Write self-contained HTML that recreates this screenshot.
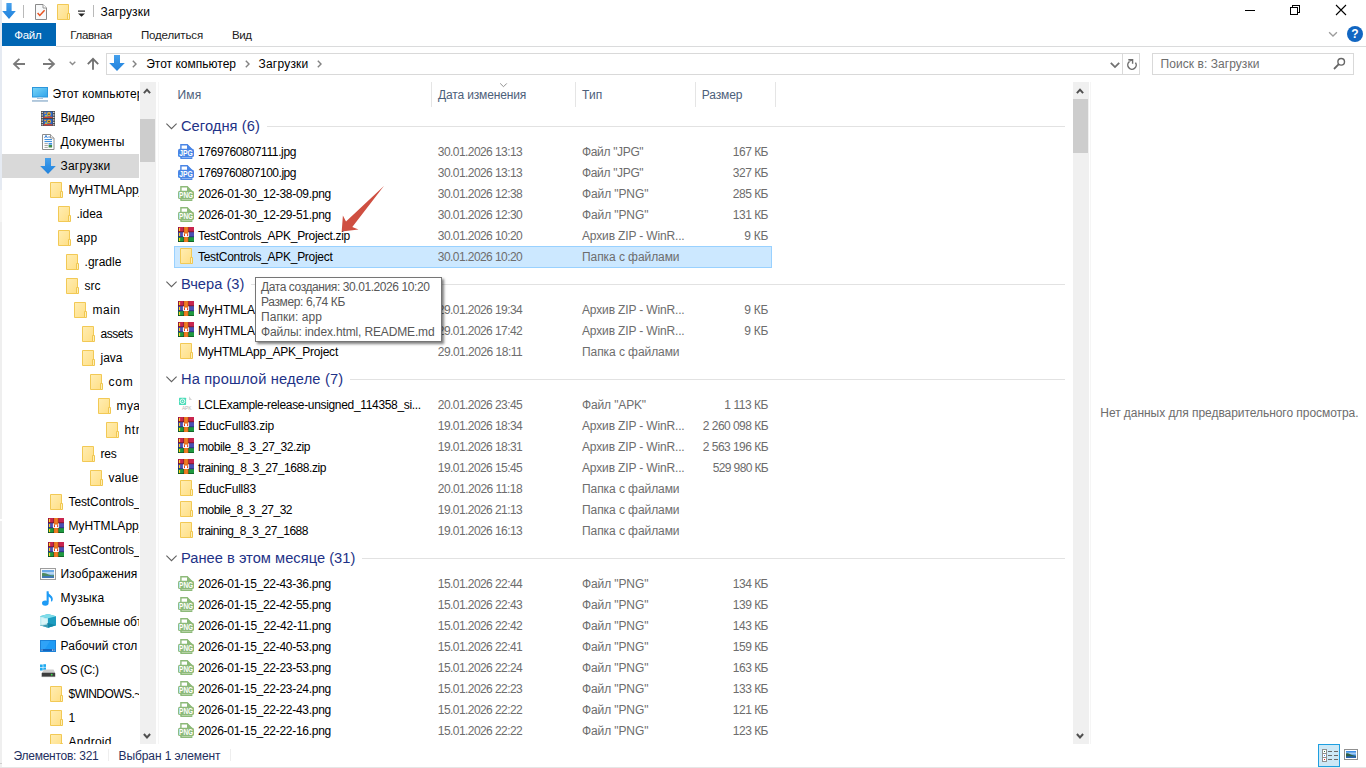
<!DOCTYPE html>
<html lang="ru"><head><meta charset="utf-8"><title>Загрузки</title>
<style>
html,body{margin:0;padding:0;background:#fff}
body{width:1366px;height:768px;position:relative;overflow:hidden;font:12px/16px 'Liberation Sans', 'DejaVu Sans', sans-serif;color:#000}
.ic{position:absolute;display:block;overflow:visible}
.t{position:absolute;white-space:pre;font-family:'Liberation Sans', 'DejaVu Sans', sans-serif;font-size:12.0px;line-height:16px}
</style></head><body>

<svg width="0" height="0" style="position:absolute">
<defs>
<linearGradient id="gfold" x1="0" y1="0" x2="1" y2="1"><stop offset="0" stop-color="#ffedb3"/><stop offset="1" stop-color="#ffdf85"/></linearGradient>
<linearGradient id="gmon" x1="0" y1="0" x2="1" y2="1"><stop offset="0" stop-color="#7ad6f8"/><stop offset="1" stop-color="#2fa3ea"/></linearGradient>
<linearGradient id="garr" x1="0" y1="0" x2="0" y2="1"><stop offset="0" stop-color="#47a1ec"/><stop offset=".5" stop-color="#2f8fe4"/><stop offset="1" stop-color="#2383dc"/></linearGradient>
<symbol id="i-folder" viewBox="0 0 16 16"><path d="M2.500.500h11v15h-11z" fill="url(#gfold)" stroke="#f2c955" stroke-width="1"/><path d="M12.500 9.500h2v6h-2z" fill="#ffefb8" stroke="#f0c750" stroke-width="1"/></symbol>
<symbol id="i-down" viewBox="0 0 16 16" preserveAspectRatio="none"><path d="M5 0h6v8h4.800L8 16 .2 8H5z" fill="url(#garr)"/></symbol>
<symbol id="i-rar" viewBox="0 0 16 16"><rect x="0" y="0" width="16" height="5" fill="#c9254f"/><rect x="0" y="5" width="16" height="5" fill="#4b50b4"/><rect x="0" y="10" width="16" height="5" fill="#1f9a40"/><rect x="0" y="4.300" width="16" height=".9" fill="#7a1631"/><rect x="0" y="9.300" width="16" height=".9" fill="#2b2f7a"/><rect x="0" y="14.200" width="16" height=".8" fill="#0f5a22"/><rect x="0" y="0" width=".9" height="15" fill="#000" opacity=".3"/><rect x="5.100" y="0" width=".8" height="15" fill="#000" opacity=".35"/><rect x="10.300" y="0" width=".8" height="15" fill="#000" opacity=".35"/><rect x="5.900" y="0" width="4.400" height="15" fill="#e8711c"/><rect x="7.600" y="0" width="1" height="15" fill="#f08a30"/><g fill="#ffd21f"><rect x="1" y="1" width="1.100" height="3"/><rect x="1" y="6" width="1.100" height="3"/><rect x="1" y="11" width="1.100" height="3"/></g><rect x="4.900" y="5.200" width="6.200" height="4.800" rx=".9" fill="#fff"/><rect x="5.900" y="5" width="4.300" height="1.600" fill="#e8711c"/><rect x="5.900" y="6.500" width="1.100" height="1.700" fill="#e65a18"/><rect x="9.100" y="6.500" width="1.100" height="1.700" fill="#e65a18"/><rect x="6" y="8" width=".9" height="1.100" fill="#e0140c"/><rect x="9.200" y="8" width=".9" height="1.100" fill="#e0140c"/></symbol>
<symbol id="i-jpg" viewBox="0 0 16 16"><path d="M2.900 1.700h6.300l4.200 4.300V15H2.900z" fill="#fff" stroke="#4a86e6" stroke-width="1.400"/><path d="M9 1v5.200h5.100z" fill="#4a86e6"/><rect x="2.900" y="14" width="11.400" height="2" fill="#4a86e6"/><rect x="3.800" y="14.500" width="9.800" height=".5" fill="#cfdffa"/><rect x="0" y="5.800" width="16" height="8.300" rx="1.700" fill="#4a86e6"/><text x="8.100" y="13" font-family="Liberation Sans, sans-serif" font-weight="bold" font-size="8.800" text-anchor="middle" fill="#fff" textLength="13.600" lengthAdjust="spacingAndGlyphs">JPG</text></symbol>
<symbol id="i-png" viewBox="0 0 16 16"><path d="M2.900 1.700h6.300l4.200 4.300V15H2.900z" fill="#fff" stroke="#8dba79" stroke-width="1.400"/><path d="M9 1v5.200h5.100z" fill="#8dba79"/><rect x="2.900" y="14" width="11.400" height="2" fill="#8dba79"/><rect x="3.800" y="14.500" width="9.800" height=".5" fill="#dcebd4"/><rect x="0" y="5.800" width="16" height="8.300" rx="1.700" fill="#8dba79"/><text x="8.100" y="13" font-family="Liberation Sans, sans-serif" font-weight="bold" font-size="8.800" text-anchor="middle" fill="#fff" textLength="14" lengthAdjust="spacingAndGlyphs">PNG</text></symbol>
<symbol id="i-apk" viewBox="0 1 16 16"><rect x="1" y="2.700" width="7.100" height="7.200" rx=".6" fill="#4adcb8"/><circle cx="4.500" cy="6.300" r="2.300" fill="none" stroke="#eafbf6" stroke-width="1"/><circle cx="4.500" cy="6.300" r=".8" fill="#eafbf6"/><path d="M11 1.300l3 3.700h-3z" fill="#d6d6d6"/><text x="8.700" y="15.200" font-family="Liberation Sans, sans-serif" font-size="4.800" text-anchor="middle" fill="#b4b4b4">APK</text></symbol>
<symbol id="i-pc" viewBox="0 0 16 16"><rect x=".5" y="1.500" width="15" height="9.500" fill="url(#gmon)" stroke="#2c96dc" stroke-width="1"/><rect x="5" y="12" width="6" height="1" fill="#a9c3d9"/><rect x="6.500" y="11.300" width="3" height=".9" fill="#c6d8e6"/><rect x="0" y="14.200" width="16" height="1.500" fill="#9cb9d3"/></symbol>
<symbol id="i-video" viewBox="0 0 16 16"><rect x="1" y="1" width="14" height="15" fill="#454545"/><rect x="3.500" y="1.600" width="9" height="6.400" fill="#2f6fd6"/><rect x="3.500" y="9" width="9" height="6.400" fill="#2a66cc"/><circle cx="9" cy="4" r="1.900" fill="#f0b02c"/><circle cx="9" cy="11.400" r="1.900" fill="#f0b02c"/><circle cx="9" cy="4.200" r=".8" fill="#3a3020"/><circle cx="9" cy="11.600" r=".8" fill="#3a3020"/><path d="M3.500 7l2-.8 1.800.5 2-.4 3.200.7V8H3.500z" fill="#d2452c"/><path d="M3.500 14.400l2-.8 1.800.5 2-.4 3.200.7v1H3.500z" fill="#d2452c"/><rect x="4.200" y="2.400" width="2" height="1.400" fill="#e9a13a"/><rect x="4.200" y="9.800" width="2" height="1.400" fill="#e9a13a"/><rect x="5" y="5" width="2.400" height="1.600" fill="#c9d94a" opacity=".8"/><rect x="5" y="12.400" width="2.400" height="1.600" fill="#c9d94a" opacity=".8"/><g fill="#f4f4f4"><rect x="1.600" y="1.800" width="1.200" height="1.300"/><rect x="1.600" y="4.300" width="1.200" height="1.300"/><rect x="1.600" y="6.800" width="1.200" height="1.300"/><rect x="1.600" y="9.300" width="1.200" height="1.300"/><rect x="1.600" y="11.800" width="1.200" height="1.300"/><rect x="1.600" y="14.200" width="1.200" height="1.200"/><rect x="13.200" y="1.800" width="1.200" height="1.300"/><rect x="13.200" y="4.300" width="1.200" height="1.300"/><rect x="13.200" y="6.800" width="1.200" height="1.300"/><rect x="13.200" y="9.300" width="1.200" height="1.300"/><rect x="13.200" y="11.800" width="1.200" height="1.300"/><rect x="13.200" y="14.200" width="1.200" height="1.200"/></g></symbol>
<symbol id="i-docs" viewBox="0 0 16 16"><path d="M2.500.500h8l3.500 3.500v11.500h-11.500z" fill="#fff" stroke="#8c8c8c" stroke-width="1"/><path d="M10.500.500V4H14" fill="#ececec" stroke="#8c8c8c" stroke-width=".9"/><path d="M4.500 5.600h7.500M4.500 7.600h7.500" stroke="#2f86dc" stroke-width="1"/><path d="M4.600 4l1.400-2.600L7.400 4M8.300 3h1.600" stroke="#1f6fcc" stroke-width=".9" fill="none"/><path d="M4.500 9.600h3.300M4.500 11.500h3.300M4.500 13.400h3.300" stroke="#9a9a9a" stroke-width=".9"/><rect x="8.600" y="9.100" width="3.500" height="1.500" fill="#2f86dc"/><rect x="8.600" y="11" width="3.500" height="2.500" fill="#3c8a4b"/></symbol>
<symbol id="i-pics" viewBox="0 0 16 16"><rect x=".5" y="2.500" width="15" height="11" fill="#fafafa" stroke="#9d9d9d" stroke-width="1"/><rect x="2" y="4" width="12" height="8" fill="#6aa9e6"/><rect x="2" y="6" width="12" height="2.500" fill="#c9e0f4" opacity=".8"/><path d="M2 7.200c2.500-.8 4.500.2 6.500 1.400 2 .9 3.800.8 5.500.4V12H2z" fill="#4e8a63"/><path d="M2 10.400c3-.6 8-.4 12 0V12H2z" fill="#3f78b8"/></symbol>
<symbol id="i-music" viewBox="0 0 16 16"><rect x="6.600" y="1.300" width="2.100" height="11" fill="#1e9bf5"/><path d="M7 1.300c1 3 5.800 4 5.800 7.700 0 1-.3 1.800-.8 2.400-.9.300-1.300-.2-1-.8.500-3-2.200-4-4-4.600z" fill="#1e9bf5"/><ellipse cx="5.300" cy="13.100" rx="3.300" ry="2.600" fill="#1e9bf5"/></symbol>
<symbol id="i-3d" viewBox="0 2 16 16"><path d="M0 4.300L8 2l8 2.300v9L8 15.700 0 13.300z" fill="#2fb6d0"/><path d="M0 4.300l8 2v9.400l-8-2.400z" fill="#bfecf2"/><path d="M8 6.300l8-2v9l-8 2.400z" fill="#1c9cc0"/><path d="M0 4.300L8 2l8 2.300-8 2z" fill="#7edce9"/><path d="M0 13.300l8-2.300 8 2.300-8 2.400z" fill="#0f7f9e" opacity=".75"/><path d="M1.500 6l5.500 1.300v5.200l-5.500 1.200z" fill="#e2f8fa" opacity=".75"/></symbol>
<symbol id="i-desk" viewBox="0 0 16 16"><rect x=".5" y="2.500" width="15" height="11" fill="#1e9bf5" stroke="#1b82d8" stroke-width="1"/><path d="M1 3l9 0L5 11H1z" fill="#3aa9f8" opacity=".6"/><rect x="1" y="11" width="14" height="2" fill="#1466c0"/><rect x="1.500" y="11.600" width="1" height="1" fill="#fff"/><rect x="12" y="11.600" width="1" height="1" fill="#fff"/><rect x="13.600" y="11.600" width="1" height="1" fill="#fff"/></symbol>
<symbol id="i-drive" viewBox="0 -2.200 16 16"><g fill="#1eaaf0"><rect x="0" y=".3" width="2.700" height="2.700"/><rect x="3.300" y="0" width="2.700" height="2.700"/><rect x="0" y="3.600" width="2.700" height="2.700"/><rect x="3.300" y="3.300" width="2.700" height="2.700"/></g><path d="M4 5.300h9.500l1.700 3.600H1.800z" fill="#cdcdcd"/><rect x="1.700" y="8.600" width="13.500" height="4" rx=".6" fill="#3d3d3d"/><rect x="1.700" y="12" width="13.500" height=".9" fill="#8a8a8a" opacity=".6"/><circle cx="11.700" cy="10.500" r=".9" fill="#38e04a"/></symbol>
</defs></svg>

<div style="position:absolute;left:0px;top:0px;width:2px;height:768px;background:linear-gradient(#e5eaf2 0,#e5eaf2 190px,#f5f5f5 190px,#f5f5f5 222px,#efefef 222px,#efefef 519px,#fff 519px,#fff 521px,#efefef 521px,#efefef 763px,#cfcfcf 763px,#cfcfcf 764px,#f0f0f0 764px)"></div>
<svg class="ic" style="left:1.8px;top:3px" width="14" height="16"><use href="#i-down"/></svg>
<div style="position:absolute;left:23px;top:5px;width:1px;height:13px;background:#b9b9b9"></div>
<svg class="ic" style="left:35px;top:4px" width="12" height="16" viewBox="0 0 12 16"><path d="M.5.500h7.500L11.500 4v11.500H.5z" fill="#f8f9fa" stroke="#8a8a8a" stroke-width="1"/><path d="M8 .5V4h3.500" fill="#fff" stroke="#8a8a8a" stroke-width=".9"/><path d="M2.600 9l2.200 2.400L9.600 6.200" fill="none" stroke="#e8521f" stroke-width="1.500"/></svg>
<svg class="ic" style="left:55px;top:4px" width="16" height="16"><use href="#i-folder"/></svg>
<svg class="ic" style="left:78px;top:9.500px" width="8" height="7" viewBox="0 0 8 7"><rect x="0" y="0.5" width="7" height="1.2" fill="#222"/><path d="M0 3.4h7L3.5 6.8z" fill="#222"/></svg>
<div style="position:absolute;left:93px;top:5px;width:1px;height:12px;background:#b9b9b9"></div>
<span class="t" style="left:100.50px;top:3.50px;letter-spacing:0.150px;color:#000">Загрузки</span>
<svg class="ic" style="left:1240px;top:0" width="120" height="22" viewBox="0 0 120 22" shape-rendering="crispEdges"><path d="M5 10.5h10" stroke="#000" stroke-width="1"/><path d="M50.500 7.500h7v7h-7z" fill="none" stroke="#000"/><path d="M52.500 7v-1.500h7v7h-1.500" fill="none" stroke="#000"/></svg>
<svg class="ic" style="left:1335px;top:4px" width="12" height="12" viewBox="0 0 12 12"><path d="M1 1l10 10M11 1L1 11" stroke="#000" stroke-width="1.1" fill="none"/></svg>
<div style="position:absolute;left:2px;top:23px;width:54px;height:23px;background:#0066b4"></div>
<span class="t" style="left:14.20px;top:27.00px;letter-spacing:-0.270px;color:#fff;font-size:11.5px">Файл</span>
<span class="t" style="left:70.30px;top:27.00px;letter-spacing:-0.312px;color:#1c1c1c;font-size:11.5px">Главная</span>
<span class="t" style="left:140.90px;top:27.00px;letter-spacing:-0.142px;color:#1c1c1c;font-size:11.5px">Поделиться</span>
<span class="t" style="left:232.10px;top:27.00px;letter-spacing:-0.471px;color:#1c1c1c;font-size:11.5px">Вид</span>
<div style="position:absolute;left:56px;top:46px;width:1310px;height:1px;background:#dadbdc"></div>
<svg class="ic" style="left:1328px;top:31px" width="10" height="7" viewBox="0 0 10 7"><path d="M1.100 1.200L5 5 8.900 1.200" fill="none" stroke="#9c9c9c" stroke-width="1.300"/></svg>
<div style="position:absolute;left:1347px;top:26px;width:16px;height:16px;border-radius:8px;background:#1166c2;color:#fff;font:bold 12px/16px 'Liberation Sans',sans-serif;text-align:center">?</div>
<svg class="ic" style="left:10px;top:54px" width="94" height="20" viewBox="10 54 94 20"><g fill="none" stroke="#7a7a7a" stroke-width="1.800"><path d="M25 64H14.500M19.400 58.800L14 64l5.400 5.200"/><path d="M43 64h10.500M48.600 58.800L54 64l-5.400 5.200"/><path d="M93 69.800V59.500M87.800 64.200L93 58.900l5.200 5.300" stroke="#707070"/></g><path d="M69.700 61.700l2.800 2.800 2.800-2.800" fill="none" stroke="#8c8c8c" stroke-width="1.400"/></svg>
<div style="position:absolute;left:106px;top:53px;width:1034px;height:22px;border:1px solid #d9d9d9;box-sizing:border-box;background:#fff"></div>
<svg class="ic" style="left:109px;top:55px" width="16" height="16"><use href="#i-down"/></svg>
<svg class="ic" style="left:132px;top:60px" width="5" height="8" viewBox="0 0 5 8"><path d="M.8.800L4 4 .8 7.200" fill="none" stroke="#828282" stroke-width="1.400"/></svg>
<svg class="ic" style="left:244.5px;top:60px" width="5" height="8" viewBox="0 0 5 8"><path d="M.8.800L4 4 .8 7.200" fill="none" stroke="#828282" stroke-width="1.400"/></svg>
<svg class="ic" style="left:317px;top:60px" width="5" height="8" viewBox="0 0 5 8"><path d="M.8.800L4 4 .8 7.200" fill="none" stroke="#828282" stroke-width="1.400"/></svg>
<span class="t" style="left:146.20px;top:55.50px;letter-spacing:0.005px;color:#000">Этот компьютер</span>
<span class="t" style="left:258.50px;top:55.50px;letter-spacing:0.213px;color:#000">Загрузки</span>
<svg class="ic" style="left:1108px;top:58px" width="14" height="12" viewBox="1108 58 14 12"><path d="M1110.800 62.900L1115 67.100 1119.200 62.900" fill="none" stroke="#707070" stroke-width="1.800"/></svg>
<div style="position:absolute;left:1122px;top:53px;width:1px;height:22px;background:#d9d9d9"></div>
<svg class="ic" style="left:1124px;top:56px" width="16" height="16" viewBox="1124 56 16 16"><path d="M1135.44 62.59A4.2 4.2 0 1 1 1129.41 61.69" fill="none" stroke="#6e6e6e" stroke-width="1.500"/><path d="M1128.300 59.800h4.300v4" fill="none" stroke="#6e6e6e" stroke-width="1.400"/><path d="M1129.300 61.300l3-1.300" stroke="#6e6e6e" stroke-width="1.200"/></svg>
<div style="position:absolute;left:1152px;top:53px;width:202px;height:22px;border:1px solid #d9d9d9;box-sizing:border-box;background:#fff"></div>
<span class="t" style="left:1160.50px;top:55.50px;letter-spacing:0.063px;color:#6d6d6d">Поиск в: Загрузки</span>
<svg class="ic" style="left:1333px;top:57px" width="13" height="13" viewBox="0 0 13 13"><circle cx="8.200" cy="4.800" r="3.300" fill="none" stroke="#666" stroke-width="1.400"/><path d="M5.800 7.200L1 12" stroke="#666" stroke-width="1.800"/></svg>
<div style="position:absolute;left:2px;top:154px;width:137px;height:24px;background:#d9d9d9"></div>
<div id="navclip" style="position:absolute;left:2px;top:82px;width:137px;height:662px;overflow:hidden">
<svg class="ic" style="left:30px;top:4px" width="16" height="16"><use href="#i-pc"/></svg>
<span class="t" style="left:50.50px;top:4.00px;letter-spacing:0.090px;color:#000">Этот компьютер</span>
<svg class="ic" style="left:38px;top:28px" width="16" height="16"><use href="#i-video"/></svg>
<span class="t" style="left:58.50px;top:28.00px;letter-spacing:-0.212px;color:#000">Видео</span>
<svg class="ic" style="left:38px;top:52px" width="16" height="16"><use href="#i-docs"/></svg>
<span class="t" style="left:58.50px;top:52.00px;letter-spacing:0.238px;color:#000">Документы</span>
<svg class="ic" style="left:38px;top:76px" width="16" height="16"><use href="#i-down"/></svg>
<span class="t" style="left:58.50px;top:76.00px;letter-spacing:0.213px;color:#000">Загрузки</span>
<svg class="ic" style="left:46px;top:100px" width="16" height="16"><use href="#i-folder"/></svg>
<span class="t" style="left:66.50px;top:100.00px;letter-spacing:0.032px;color:#000">MyHTMLApp_</span>
<svg class="ic" style="left:54px;top:124px" width="16" height="16"><use href="#i-folder"/></svg>
<span class="t" style="left:74.50px;top:124.00px;letter-spacing:-0.006px;color:#000">.idea</span>
<svg class="ic" style="left:54px;top:148px" width="16" height="16"><use href="#i-folder"/></svg>
<span class="t" style="left:74.50px;top:148.00px;letter-spacing:0.323px;color:#000">app</span>
<svg class="ic" style="left:62px;top:172px" width="16" height="16"><use href="#i-folder"/></svg>
<span class="t" style="left:82.50px;top:172.00px;letter-spacing:0.042px;color:#000">.gradle</span>
<svg class="ic" style="left:62px;top:196px" width="16" height="16"><use href="#i-folder"/></svg>
<span class="t" style="left:82.50px;top:196.00px;letter-spacing:0.000px;color:#000">src</span>
<svg class="ic" style="left:70px;top:220px" width="16" height="16"><use href="#i-folder"/></svg>
<span class="t" style="left:90.50px;top:220.00px;letter-spacing:0.496px;color:#000">main</span>
<svg class="ic" style="left:78px;top:244px" width="16" height="16"><use href="#i-folder"/></svg>
<span class="t" style="left:98.50px;top:244.00px;letter-spacing:-0.448px;color:#000">assets</span>
<svg class="ic" style="left:78px;top:268px" width="16" height="16"><use href="#i-folder"/></svg>
<span class="t" style="left:98.50px;top:268.00px;letter-spacing:-0.004px;color:#000">java</span>
<svg class="ic" style="left:86px;top:292px" width="16" height="16"><use href="#i-folder"/></svg>
<span class="t" style="left:106.50px;top:292.00px;letter-spacing:0.776px;color:#000">com</span>
<svg class="ic" style="left:94px;top:316px" width="16" height="16"><use href="#i-folder"/></svg>
<span class="t" style="left:114.50px;top:316.00px;letter-spacing:0.394px;color:#000">myapp</span>
<svg class="ic" style="left:102px;top:340px" width="16" height="16"><use href="#i-folder"/></svg>
<span class="t" style="left:122.50px;top:340.00px;letter-spacing:0.582px;color:#000">html</span>
<svg class="ic" style="left:78px;top:364px" width="16" height="16"><use href="#i-folder"/></svg>
<span class="t" style="left:98.50px;top:364.00px;letter-spacing:-0.224px;color:#000">res</span>
<svg class="ic" style="left:86px;top:388px" width="16" height="16"><use href="#i-folder"/></svg>
<span class="t" style="left:106.50px;top:388.00px;letter-spacing:0.219px;color:#000">values</span>
<svg class="ic" style="left:46px;top:412px" width="16" height="16"><use href="#i-folder"/></svg>
<span class="t" style="left:66.50px;top:412.00px;letter-spacing:-0.109px;color:#000">TestControls_APK</span>
<svg class="ic" style="left:46px;top:436px" width="16" height="16"><use href="#i-rar"/></svg>
<span class="t" style="left:66.50px;top:436.00px;letter-spacing:0.032px;color:#000">MyHTMLApp_APK</span>
<svg class="ic" style="left:46px;top:460px" width="16" height="16"><use href="#i-rar"/></svg>
<span class="t" style="left:66.50px;top:460.00px;letter-spacing:-0.109px;color:#000">TestControls_APK</span>
<svg class="ic" style="left:38px;top:484px" width="16" height="16"><use href="#i-pics"/></svg>
<span class="t" style="left:58.50px;top:484.00px;letter-spacing:0.143px;color:#000">Изображения</span>
<svg class="ic" style="left:38px;top:508px" width="16" height="16"><use href="#i-music"/></svg>
<span class="t" style="left:58.50px;top:508.00px;letter-spacing:0.258px;color:#000">Музыка</span>
<svg class="ic" style="left:38px;top:532px" width="16" height="16"><use href="#i-3d"/></svg>
<span class="t" style="left:58.50px;top:532.00px;letter-spacing:-0.059px;color:#000">Объемные объекты</span>
<svg class="ic" style="left:38px;top:556px" width="16" height="16"><use href="#i-desk"/></svg>
<span class="t" style="left:58.50px;top:556.00px;letter-spacing:0.139px;color:#000">Рабочий стол</span>
<svg class="ic" style="left:38px;top:580px" width="16" height="16"><use href="#i-drive"/></svg>
<span class="t" style="left:58.50px;top:580.00px;letter-spacing:-0.382px;color:#000">OS (C:)</span>
<svg class="ic" style="left:46px;top:604px" width="16" height="16"><use href="#i-folder"/></svg>
<span class="t" style="left:66.50px;top:604.00px;letter-spacing:-0.541px;color:#000">$WINDOWS.~BT</span>
<svg class="ic" style="left:46px;top:628px" width="16" height="16"><use href="#i-folder"/></svg>
<span class="t" style="left:66.50px;top:628.00px;letter-spacing:-0.288px;color:#000">1</span>
<svg class="ic" style="left:46px;top:652px" width="16" height="16"><use href="#i-folder"/></svg>
<span class="t" style="left:66.50px;top:652.00px;letter-spacing:0.261px;color:#000">Android</span>
</div>
<div style="position:absolute;left:140px;top:82px;width:16px;height:662px;background:#f0f0f0"></div>
<div style="position:absolute;left:140px;top:119px;width:15px;height:43px;background:#cdcdcd"></div>
<div style="position:absolute;left:158px;top:82px;width:1px;height:662px;background:#f6f6f6"></div>
<svg class="ic" style="left:139.2px;top:84px" width="16" height="14" viewBox="139.2 84 16 14"><path d="M144.1 93.100L147.2 89.700 150.29999999999998 93.100" fill="none" stroke="#505050" stroke-width="2"/></svg>
<svg class="ic" style="left:139.2px;top:729px" width="16" height="14" viewBox="139.2 729 16 14"><path d="M144.1 734L147.2 737.400 150.29999999999998 734" fill="none" stroke="#505050" stroke-width="2"/></svg>
<div style="position:absolute;left:431px;top:82px;width:1px;height:25px;background:#e5e5e5"></div>
<div style="position:absolute;left:575px;top:82px;width:1px;height:25px;background:#e5e5e5"></div>
<div style="position:absolute;left:695px;top:82px;width:1px;height:25px;background:#e5e5e5"></div>
<div style="position:absolute;left:775px;top:82px;width:1px;height:25px;background:#e5e5e5"></div>
<span class="t" style="left:177.50px;top:86.50px;letter-spacing:0.208px;color:#4c607a">Имя</span>
<span class="t" style="left:438.10px;top:86.50px;letter-spacing:-0.155px;color:#4c607a">Дата изменения</span>
<span class="t" style="left:582.00px;top:86.50px;letter-spacing:0.095px;color:#4c607a">Тип</span>
<span class="t" style="left:701.80px;top:86.50px;letter-spacing:-0.125px;color:#4c607a">Размер</span>
<svg class="ic" style="left:500px;top:83px" width="7" height="5" viewBox="0 0 7 5"><path d="M.2.400L3.500 3.700 6.800.400" fill="none" stroke="#858585" stroke-width=".9"/></svg>
<div style="position:absolute;left:174px;top:246px;width:598px;height:22px;background:#cce8ff;border:1px solid #99d1ff;box-sizing:border-box"></div>
<svg class="ic" style="left:166px;top:123.0px" width="11" height="7" viewBox="0 0 11 7"><path d="M.4.600L5.500 5.700 10.600.600" fill="none" stroke="#606060" stroke-width="1.100"/></svg>
<span class="t" style="left:180.90px;top:115.50px;letter-spacing:0.077px;color:#1e3287;font-size:14.67px;line-height:20px">Сегодня (6)</span>
<div style="position:absolute;left:266.5px;top:125.5px;width:798.5px;height:1px;background:#e2e2e2"></div>
<svg class="ic" style="left:178px;top:143.0px" width="16" height="16"><use href="#i-jpg"/></svg>
<span class="t" style="left:198.00px;top:143.50px;letter-spacing:-0.372px;color:#000">1769760807111.jpg</span>
<span class="t" style="left:437.80px;top:143.50px;letter-spacing:-0.564px;color:#6d6d6d">30.01.2026 13:13</span>
<span class="t" style="left:582.00px;top:143.50px;letter-spacing:-0.340px;color:#6d6d6d">Файл &quot;JPG&quot;</span>
<span class="t" style="left:732.80px;top:143.50px;letter-spacing:-0.506px;color:#6d6d6d">167 КБ</span>
<svg class="ic" style="left:178px;top:164.0px" width="16" height="16"><use href="#i-jpg"/></svg>
<span class="t" style="left:198.00px;top:164.50px;letter-spacing:-0.477px;color:#000">1769760807100.jpg</span>
<span class="t" style="left:437.80px;top:164.50px;letter-spacing:-0.564px;color:#6d6d6d">30.01.2026 13:13</span>
<span class="t" style="left:582.00px;top:164.50px;letter-spacing:-0.340px;color:#6d6d6d">Файл &quot;JPG&quot;</span>
<span class="t" style="left:732.80px;top:164.50px;letter-spacing:-0.506px;color:#6d6d6d">327 КБ</span>
<svg class="ic" style="left:178px;top:185.0px" width="16" height="16"><use href="#i-png"/></svg>
<span class="t" style="left:198.00px;top:185.50px;letter-spacing:-0.281px;color:#000">2026-01-30_12-38-09.png</span>
<span class="t" style="left:437.80px;top:185.50px;letter-spacing:-0.564px;color:#6d6d6d">30.01.2026 12:38</span>
<span class="t" style="left:582.00px;top:185.50px;letter-spacing:-0.106px;color:#6d6d6d">Файл &quot;PNG&quot;</span>
<span class="t" style="left:732.80px;top:185.50px;letter-spacing:-0.506px;color:#6d6d6d">285 КБ</span>
<svg class="ic" style="left:178px;top:206.0px" width="16" height="16"><use href="#i-png"/></svg>
<span class="t" style="left:198.00px;top:206.50px;letter-spacing:-0.281px;color:#000">2026-01-30_12-29-51.png</span>
<span class="t" style="left:437.80px;top:206.50px;letter-spacing:-0.564px;color:#6d6d6d">30.01.2026 12:30</span>
<span class="t" style="left:582.00px;top:206.50px;letter-spacing:-0.106px;color:#6d6d6d">Файл &quot;PNG&quot;</span>
<span class="t" style="left:732.80px;top:206.50px;letter-spacing:-0.506px;color:#6d6d6d">131 КБ</span>
<svg class="ic" style="left:178px;top:227.0px" width="16" height="16"><use href="#i-rar"/></svg>
<span class="t" style="left:198.00px;top:227.50px;letter-spacing:-0.289px;color:#000">TestControls_APK_Project.zip</span>
<span class="t" style="left:437.80px;top:227.50px;letter-spacing:-0.564px;color:#6d6d6d">30.01.2026 10:20</span>
<span class="t" style="left:582.00px;top:227.50px;letter-spacing:-0.153px;color:#6d6d6d">Архив ZIP - WinR...</span>
<span class="t" style="left:744.20px;top:227.50px;letter-spacing:-0.269px;color:#6d6d6d">9 КБ</span>
<svg class="ic" style="left:178px;top:248.0px" width="16" height="16"><use href="#i-folder"/></svg>
<span class="t" style="left:198.00px;top:248.50px;letter-spacing:-0.288px;color:#000">TestControls_APK_Project</span>
<span class="t" style="left:437.80px;top:248.50px;letter-spacing:-0.564px;color:#6d6d6d">30.01.2026 10:20</span>
<span class="t" style="left:582.00px;top:248.50px;letter-spacing:-0.069px;color:#6d6d6d">Папка с файлами</span>
<svg class="ic" style="left:166px;top:281.0px" width="11" height="7" viewBox="0 0 11 7"><path d="M.4.600L5.500 5.700 10.600.600" fill="none" stroke="#606060" stroke-width="1.100"/></svg>
<span class="t" style="left:180.90px;top:273.50px;letter-spacing:0.014px;color:#1e3287;font-size:14.67px;line-height:20px">Вчера (3)</span>
<div style="position:absolute;left:251px;top:283.5px;width:814px;height:1px;background:#e2e2e2"></div>
<svg class="ic" style="left:178px;top:301.0px" width="16" height="16"><use href="#i-rar"/></svg>
<span class="t" style="left:198.00px;top:301.50px;letter-spacing:0.075px;color:#000">MyHTMLApp_APK_Project (1).zip</span>
<span class="t" style="left:437.80px;top:301.50px;letter-spacing:-0.564px;color:#6d6d6d">29.01.2026 19:34</span>
<span class="t" style="left:582.00px;top:301.50px;letter-spacing:-0.153px;color:#6d6d6d">Архив ZIP - WinR...</span>
<span class="t" style="left:744.20px;top:301.50px;letter-spacing:-0.269px;color:#6d6d6d">9 КБ</span>
<svg class="ic" style="left:178px;top:322.0px" width="16" height="16"><use href="#i-rar"/></svg>
<span class="t" style="left:198.00px;top:322.50px;letter-spacing:0.075px;color:#000">MyHTMLApp_APK_Project.zip</span>
<span class="t" style="left:437.80px;top:322.50px;letter-spacing:-0.564px;color:#6d6d6d">29.01.2026 17:42</span>
<span class="t" style="left:582.00px;top:322.50px;letter-spacing:-0.153px;color:#6d6d6d">Архив ZIP - WinR...</span>
<span class="t" style="left:744.20px;top:322.50px;letter-spacing:-0.269px;color:#6d6d6d">9 КБ</span>
<svg class="ic" style="left:178px;top:343.0px" width="16" height="16"><use href="#i-folder"/></svg>
<span class="t" style="left:198.00px;top:343.50px;letter-spacing:-0.225px;color:#000">MyHTMLApp_APK_Project</span>
<span class="t" style="left:437.80px;top:343.50px;letter-spacing:-0.508px;color:#6d6d6d">29.01.2026 18:11</span>
<span class="t" style="left:582.00px;top:343.50px;letter-spacing:-0.069px;color:#6d6d6d">Папка с файлами</span>
<svg class="ic" style="left:166px;top:376.0px" width="11" height="7" viewBox="0 0 11 7"><path d="M.4.600L5.500 5.700 10.600.600" fill="none" stroke="#606060" stroke-width="1.100"/></svg>
<span class="t" style="left:180.90px;top:368.50px;letter-spacing:0.178px;color:#1e3287;font-size:14.67px;line-height:20px">На прошлой неделе (7)</span>
<div style="position:absolute;left:350px;top:378.5px;width:715px;height:1px;background:#e2e2e2"></div>
<svg class="ic" style="left:178px;top:396.0px" width="16" height="16"><use href="#i-apk"/></svg>
<span class="t" style="left:198.00px;top:396.50px;letter-spacing:-0.328px;color:#000">LCLExample-release-unsigned_114358_si...</span>
<span class="t" style="left:437.80px;top:396.50px;letter-spacing:-0.564px;color:#6d6d6d">20.01.2026 23:45</span>
<span class="t" style="left:582.00px;top:396.50px;letter-spacing:-0.138px;color:#6d6d6d">Файл &quot;APK&quot;</span>
<span class="t" style="left:724.30px;top:396.50px;letter-spacing:-0.455px;color:#6d6d6d">1 113 КБ</span>
<svg class="ic" style="left:178px;top:417.0px" width="16" height="16"><use href="#i-rar"/></svg>
<span class="t" style="left:198.00px;top:417.50px;letter-spacing:-0.194px;color:#000">EducFull83.zip</span>
<span class="t" style="left:437.80px;top:417.50px;letter-spacing:-0.564px;color:#6d6d6d">19.01.2026 18:34</span>
<span class="t" style="left:582.00px;top:417.50px;letter-spacing:-0.153px;color:#6d6d6d">Архив ZIP - WinR...</span>
<span class="t" style="left:702.80px;top:417.50px;letter-spacing:-0.533px;color:#6d6d6d">2 260 098 КБ</span>
<svg class="ic" style="left:178px;top:438.0px" width="16" height="16"><use href="#i-rar"/></svg>
<span class="t" style="left:198.00px;top:438.50px;letter-spacing:-0.438px;color:#000">mobile_8_3_27_32.zip</span>
<span class="t" style="left:437.80px;top:438.50px;letter-spacing:-0.564px;color:#6d6d6d">19.01.2026 18:31</span>
<span class="t" style="left:582.00px;top:438.50px;letter-spacing:-0.153px;color:#6d6d6d">Архив ZIP - WinR...</span>
<span class="t" style="left:702.80px;top:438.50px;letter-spacing:-0.533px;color:#6d6d6d">2 563 196 КБ</span>
<svg class="ic" style="left:178px;top:459.0px" width="16" height="16"><use href="#i-rar"/></svg>
<span class="t" style="left:198.00px;top:459.50px;letter-spacing:-0.422px;color:#000">training_8_3_27_1688.zip</span>
<span class="t" style="left:437.80px;top:459.50px;letter-spacing:-0.564px;color:#6d6d6d">19.01.2026 15:45</span>
<span class="t" style="left:582.00px;top:459.50px;letter-spacing:-0.153px;color:#6d6d6d">Архив ZIP - WinR...</span>
<span class="t" style="left:712.80px;top:459.50px;letter-spacing:-0.638px;color:#6d6d6d">529 980 КБ</span>
<svg class="ic" style="left:178px;top:480.0px" width="16" height="16"><use href="#i-folder"/></svg>
<span class="t" style="left:198.00px;top:480.50px;letter-spacing:-0.205px;color:#000">EducFull83</span>
<span class="t" style="left:437.80px;top:480.50px;letter-spacing:-0.508px;color:#6d6d6d">20.01.2026 11:18</span>
<span class="t" style="left:582.00px;top:480.50px;letter-spacing:-0.069px;color:#6d6d6d">Папка с файлами</span>
<svg class="ic" style="left:178px;top:501.0px" width="16" height="16"><use href="#i-folder"/></svg>
<span class="t" style="left:198.00px;top:501.50px;letter-spacing:-0.506px;color:#000">mobile_8_3_27_32</span>
<span class="t" style="left:437.80px;top:501.50px;letter-spacing:-0.564px;color:#6d6d6d">19.01.2026 21:13</span>
<span class="t" style="left:582.00px;top:501.50px;letter-spacing:-0.069px;color:#6d6d6d">Папка с файлами</span>
<svg class="ic" style="left:178px;top:522.0px" width="16" height="16"><use href="#i-folder"/></svg>
<span class="t" style="left:198.00px;top:522.50px;letter-spacing:-0.473px;color:#000">training_8_3_27_1688</span>
<span class="t" style="left:437.80px;top:522.50px;letter-spacing:-0.564px;color:#6d6d6d">19.01.2026 16:13</span>
<span class="t" style="left:582.00px;top:522.50px;letter-spacing:-0.069px;color:#6d6d6d">Папка с файлами</span>
<svg class="ic" style="left:166px;top:555.0px" width="11" height="7" viewBox="0 0 11 7"><path d="M.4.600L5.500 5.700 10.600.600" fill="none" stroke="#606060" stroke-width="1.100"/></svg>
<span class="t" style="left:180.90px;top:547.50px;letter-spacing:0.030px;color:#1e3287;font-size:14.67px;line-height:20px">Ранее в этом месяце (31)</span>
<div style="position:absolute;left:362px;top:557.5px;width:703px;height:1px;background:#e2e2e2"></div>
<svg class="ic" style="left:178px;top:575.0px" width="16" height="16"><use href="#i-png"/></svg>
<span class="t" style="left:198.00px;top:575.50px;letter-spacing:-0.281px;color:#000">2026-01-15_22-43-36.png</span>
<span class="t" style="left:437.80px;top:575.50px;letter-spacing:-0.564px;color:#6d6d6d">15.01.2026 22:44</span>
<span class="t" style="left:582.00px;top:575.50px;letter-spacing:-0.106px;color:#6d6d6d">Файл &quot;PNG&quot;</span>
<span class="t" style="left:732.80px;top:575.50px;letter-spacing:-0.506px;color:#6d6d6d">134 КБ</span>
<svg class="ic" style="left:178px;top:596.0px" width="16" height="16"><use href="#i-png"/></svg>
<span class="t" style="left:198.00px;top:596.50px;letter-spacing:-0.281px;color:#000">2026-01-15_22-42-55.png</span>
<span class="t" style="left:437.80px;top:596.50px;letter-spacing:-0.564px;color:#6d6d6d">15.01.2026 22:43</span>
<span class="t" style="left:582.00px;top:596.50px;letter-spacing:-0.106px;color:#6d6d6d">Файл &quot;PNG&quot;</span>
<span class="t" style="left:732.80px;top:596.50px;letter-spacing:-0.506px;color:#6d6d6d">139 КБ</span>
<svg class="ic" style="left:178px;top:617.0px" width="16" height="16"><use href="#i-png"/></svg>
<span class="t" style="left:198.00px;top:617.50px;letter-spacing:-0.242px;color:#000">2026-01-15_22-42-11.png</span>
<span class="t" style="left:437.80px;top:617.50px;letter-spacing:-0.564px;color:#6d6d6d">15.01.2026 22:42</span>
<span class="t" style="left:582.00px;top:617.50px;letter-spacing:-0.106px;color:#6d6d6d">Файл &quot;PNG&quot;</span>
<span class="t" style="left:732.80px;top:617.50px;letter-spacing:-0.506px;color:#6d6d6d">143 КБ</span>
<svg class="ic" style="left:178px;top:638.0px" width="16" height="16"><use href="#i-png"/></svg>
<span class="t" style="left:198.00px;top:638.50px;letter-spacing:-0.281px;color:#000">2026-01-15_22-40-53.png</span>
<span class="t" style="left:437.80px;top:638.50px;letter-spacing:-0.564px;color:#6d6d6d">15.01.2026 22:41</span>
<span class="t" style="left:582.00px;top:638.50px;letter-spacing:-0.106px;color:#6d6d6d">Файл &quot;PNG&quot;</span>
<span class="t" style="left:732.80px;top:638.50px;letter-spacing:-0.506px;color:#6d6d6d">159 КБ</span>
<svg class="ic" style="left:178px;top:659.0px" width="16" height="16"><use href="#i-png"/></svg>
<span class="t" style="left:198.00px;top:659.50px;letter-spacing:-0.281px;color:#000">2026-01-15_22-23-53.png</span>
<span class="t" style="left:437.80px;top:659.50px;letter-spacing:-0.564px;color:#6d6d6d">15.01.2026 22:24</span>
<span class="t" style="left:582.00px;top:659.50px;letter-spacing:-0.106px;color:#6d6d6d">Файл &quot;PNG&quot;</span>
<span class="t" style="left:732.80px;top:659.50px;letter-spacing:-0.506px;color:#6d6d6d">163 КБ</span>
<svg class="ic" style="left:178px;top:680.0px" width="16" height="16"><use href="#i-png"/></svg>
<span class="t" style="left:198.00px;top:680.50px;letter-spacing:-0.281px;color:#000">2026-01-15_22-23-24.png</span>
<span class="t" style="left:437.80px;top:680.50px;letter-spacing:-0.564px;color:#6d6d6d">15.01.2026 22:23</span>
<span class="t" style="left:582.00px;top:680.50px;letter-spacing:-0.106px;color:#6d6d6d">Файл &quot;PNG&quot;</span>
<span class="t" style="left:732.80px;top:680.50px;letter-spacing:-0.506px;color:#6d6d6d">133 КБ</span>
<svg class="ic" style="left:178px;top:701.0px" width="16" height="16"><use href="#i-png"/></svg>
<span class="t" style="left:198.00px;top:701.50px;letter-spacing:-0.281px;color:#000">2026-01-15_22-22-43.png</span>
<span class="t" style="left:437.80px;top:701.50px;letter-spacing:-0.564px;color:#6d6d6d">15.01.2026 22:22</span>
<span class="t" style="left:582.00px;top:701.50px;letter-spacing:-0.106px;color:#6d6d6d">Файл &quot;PNG&quot;</span>
<span class="t" style="left:732.80px;top:701.50px;letter-spacing:-0.506px;color:#6d6d6d">121 КБ</span>
<svg class="ic" style="left:178px;top:722.0px" width="16" height="16"><use href="#i-png"/></svg>
<span class="t" style="left:198.00px;top:722.50px;letter-spacing:-0.281px;color:#000">2026-01-15_22-22-16.png</span>
<span class="t" style="left:437.80px;top:722.50px;letter-spacing:-0.564px;color:#6d6d6d">15.01.2026 22:22</span>
<span class="t" style="left:582.00px;top:722.50px;letter-spacing:-0.106px;color:#6d6d6d">Файл &quot;PNG&quot;</span>
<span class="t" style="left:732.80px;top:722.50px;letter-spacing:-0.506px;color:#6d6d6d">123 КБ</span>
<div style="position:absolute;left:1073px;top:82px;width:16px;height:662px;background:#f0f0f0"></div>
<div style="position:absolute;left:1073px;top:99px;width:15px;height:54px;background:#cdcdcd"></div>
<svg class="ic" style="left:1072.1px;top:84px" width="16" height="14" viewBox="1072.1 84 16 14"><path d="M1077.0 93.100L1080.1 89.700 1083.1999999999998 93.100" fill="none" stroke="#505050" stroke-width="2"/></svg>
<svg class="ic" style="left:1072.1px;top:729px" width="16" height="14" viewBox="1072.1 729 16 14"><path d="M1077.0 734L1080.1 737.400 1083.1999999999998 734" fill="none" stroke="#505050" stroke-width="2"/></svg>
<div style="position:absolute;left:1090px;top:82px;width:1px;height:662px;background:#f5f5f5"></div>
<svg class="ic" style="left:330px;top:180px" width="70" height="60" viewBox="330 180 70 60"><path d="M383.900 185.900L346 221.400 342.900 215.500 341.700 231.600 358.500 229.400 352.300 226.900z" fill="#cf4f41"/></svg>
<div style="position:absolute;left:255px;top:277px;width:187px;height:65px;box-sizing:border-box;border:1px solid #767676;background:#fff;box-shadow:2px 2px 2.500px rgba(0,0,0,.5)"></div>
<span class="t" style="left:261.00px;top:279.00px;letter-spacing:-0.417px;color:#575757">Дата создания: 30.01.2026 10:20</span>
<span class="t" style="left:261.00px;top:294.00px;letter-spacing:-0.365px;color:#575757">Размер: 6,74 КБ</span>
<span class="t" style="left:261.00px;top:309.00px;letter-spacing:0.055px;color:#575757">Папки: app</span>
<span class="t" style="left:261.00px;top:324.00px;letter-spacing:-0.143px;color:#575757">Файлы: index.html, README.md</span>
<span class="t" style="left:1100.30px;top:404.50px;letter-spacing:-0.052px;color:#6d6d6d">Нет данных для предварительного просмотра.</span>
<span class="t" style="left:13.50px;top:748.00px;letter-spacing:-0.254px;color:#1f2f5f">Элементов: 321</span>
<span class="t" style="left:118.50px;top:748.00px;letter-spacing:-0.088px;color:#1f2f5f">Выбран 1 элемент</span>
<div style="position:absolute;left:108px;top:749px;width:1px;height:12px;background:#eeeeee"></div>
<div style="position:absolute;left:230px;top:749px;width:1px;height:12px;background:#eeeeee"></div>
<div style="position:absolute;left:0px;top:767px;width:1366px;height:1px;background:#e6e6e6"></div>
<div style="position:absolute;left:1318px;top:744px;width:22px;height:23px;background:#cde8f6;border:1px solid #1e9fe0;box-sizing:border-box"></div>
<svg class="ic" style="left:1322px;top:749px" width="17" height="13" viewBox="0 0 17 13"><rect x="0" y="0" width="5" height="13" fill="#8f8f8f"/><rect x="1" y="1" width="3" height="3" fill="#fff"/><rect x="1" y="5" width="3" height="3" fill="#fff"/><rect x="1" y="9" width="3" height="3" fill="#fff"/><rect x="2" y="2" width="1" height="1" fill="#3c7a4a"/><rect x="2" y="6" width="1" height="1" fill="#4a8af0"/><rect x="2" y="10" width="1" height="1" fill="#e02020"/><g fill="#6a6a6a"><rect x="6" y="2" width="4" height="1"/><rect x="12" y="2" width="4" height="1"/><rect x="6" y="6" width="4" height="1"/><rect x="12" y="6" width="4" height="1"/><rect x="6" y="10" width="4" height="1"/><rect x="12" y="10" width="4" height="1"/></g></svg>
<svg class="ic" style="left:1344px;top:749px" width="14" height="11" viewBox="0 0 14 11"><rect x=".5" y=".5" width="13" height="10" fill="#fff" stroke="#8f8f8f"/><rect x="2" y="2" width="10" height="7" fill="#3f8fe8"/><rect x="2" y="3.500" width="10" height="2" fill="#cfe4f6" opacity=".7"/><path d="M2 4.500c2-1 4 .5 6 1.500l4 1V9H2z" fill="#2f5f45"/><path d="M2 7.500c3-.5 6-.3 10 0V9H2z" fill="#2a64b0"/></svg>

</body></html>
